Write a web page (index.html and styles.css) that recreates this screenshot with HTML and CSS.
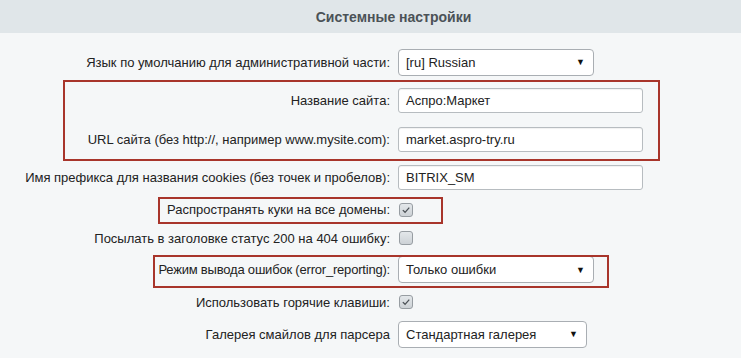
FILE: index.html
```html
<!DOCTYPE html>
<html lang="ru">
<head>
<meta charset="utf-8">
<title>Системные настройки</title>
<link rel="stylesheet" href="styles.css">
</head>
<body>
<div class="page">
  <div class="header">Системные настройки</div>
  <div class="form">
    <div class="row r1">
      <div class="label">Язык по умолчанию для административной части:</div>
      <div class="control"><div class="select w196"><span>[ru] Russian</span><span class="arrow">▼</span></div></div>
    </div>
    <div class="row r2">
      <div class="label">Название сайта:</div>
      <div class="control"><div class="input">Аспро:Маркет</div></div>
    </div>
    <div class="row r3">
      <div class="label">URL сайта (без http://, например www.mysite.com):</div>
      <div class="control"><div class="input">market.aspro-try.ru</div></div>
    </div>
    <div class="row r4">
      <div class="label">Имя префикса для названия cookies (без точек и пробелов):</div>
      <div class="control"><div class="input">BITRIX_SM</div></div>
    </div>
    <div class="row r5">
      <div class="label">Распространять куки на все домены:</div>
      <div class="control"><span class="checkbox checked"><svg viewBox="0 0 14 14" width="14" height="14"><path d="M3.3 7.1 L5.9 9.7 L10.8 4.2" fill="none" stroke="#4a5055" stroke-width="1.5"/></svg></span></div>
    </div>
    <div class="row r6">
      <div class="label">Посылать в заголовке статус 200 на 404 ошибку:</div>
      <div class="control"><span class="checkbox"></span></div>
    </div>
    <div class="row r7">
      <div class="label tight">Режим вывода ошибок (error_reporting):</div>
      <div class="control"><div class="select w196"><span>Только ошибки</span><span class="arrow">▼</span></div></div>
    </div>
    <div class="row r8">
      <div class="label">Использовать горячие клавиши:</div>
      <div class="control"><span class="checkbox checked"><svg viewBox="0 0 14 14" width="14" height="14"><path d="M3.3 7.1 L5.9 9.7 L10.8 4.2" fill="none" stroke="#4a5055" stroke-width="1.5"/></svg></span></div>
    </div>
    <div class="row r9">
      <div class="label">Галерея смайлов для парсера</div>
      <div class="control"><div class="select w189"><span>Стандартная галерея</span><span class="arrow">▼</span></div></div>
    </div>
  </div>
  <div class="mark m1"></div>
  <div class="mark m2"></div>
  <div class="mark m3"></div>
</div>
</body>
</html>
```

FILE: styles.css
```css
html, body {
  margin: 0;
  padding: 0;
}
body {
  background: #f5f7f8;
  font-family: "Liberation Sans", Arial, sans-serif;
  font-size: 13px;
  color: #222;
}
.page {
  position: relative;
  width: 741px;
  height: 358px;
  overflow: hidden;
}
.header {
  height: 33px;
  background: #e0e6e9;
  color: #4b5257;
  font-weight: bold;
  font-size: 14px;
  display: flex;
  align-items: center;
  justify-content: center;
  padding-left: 46px;
  box-sizing: border-box;
}
.form {
  padding-top: 10px;
  display: flex;
  flex-direction: column;
}
.row {
  display: flex;
  align-items: center;
}
.r1 { height: 38px; }
.r2 { height: 39px; }
.r3 { height: 39px; }
.r4 { height: 36px; }
.r5 { height: 29px; }
.r6 { height: 28px; }
.r7 { height: 35px; }
.r8 { height: 30px; }
.r9 { height: 34px; }
.label {
  width: 390px;
  text-align: right;
  white-space: nowrap;
  padding-right: 8px;
  box-sizing: content-box;
}
.tight {
  letter-spacing: -0.2px;
}
.control {
  display: flex;
  align-items: center;
}
.input {
  width: 245px;
  height: 25px;
  box-sizing: border-box;
  background: #fff;
  border: 1px solid #b7bcc0;
  border-radius: 3px;
  padding: 0 7px;
  display: flex;
  align-items: center;
  box-shadow: inset 0 1px 1px rgba(0,0,0,0.06);
}
.select {
  height: 27px;
  box-sizing: border-box;
  background: #fff;
  border: 1px solid #a9aeb3;
  border-radius: 4px;
  padding: 0 8px 0 7px;
  display: flex;
  align-items: center;
  justify-content: space-between;
}
.w196 { width: 196px; }
.w189 { width: 189px; }
.arrow {
  font-size: 9px;
  color: #111;
}
.checkbox {
  width: 14px;
  height: 14px;
  box-sizing: border-box;
  border: 1px solid #979da2;
  border-radius: 3px;
  background: linear-gradient(#e3e7ea, #cdd2d6);
  display: inline-flex;
  align-items: center;
  justify-content: center;
  margin-left: 1px;
}
.checkbox svg {
  display: block;
}
.mark {
  position: absolute;
  border: 2px solid #a8352b;
  box-sizing: border-box;
}
.m1 { left: 63px; top: 80px; width: 597px; height: 81px; }
.m2 { left: 158px; top: 197px; width: 285px; height: 27px; }
.m3 { left: 153px; top: 255px; width: 456px; height: 33px; }
```
